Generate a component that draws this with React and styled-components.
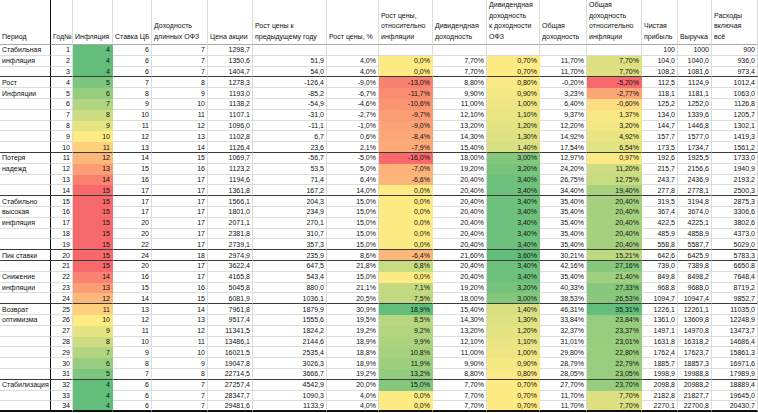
import React from 'react'
import styled, { createGlobalStyle } from 'styled-components'

const GlobalStyle = createGlobalStyle`
  html, body {
    margin: 0;
    padding: 0;
    background: #ffffff;
  }
  body {
    font-family: "Liberation Sans", Arial, sans-serif;
  }
`

const RED = [248, 105, 107]
const YEL = [255, 235, 132]
const GRN = [99, 190, 123]

const mix = (a, b, t) => {
  const k = Math.max(0, Math.min(1, t))
  const c = a.map((v, i) => Math.round(v + (b[i] - v) * k))
  return `rgb(${c[0]}, ${c[1]}, ${c[2]})`
}

const num = (s) => parseFloat(String(s).replace('%', '').replace(',', '.'))

// 3-color scale: low colour at min, yellow at mid, high colour at max
const scale3 = (v, min, mid, max, low, high) => {
  if (v <= mid) return mix(low, YEL, (v - min) / (mid - min))
  return mix(YEL, high, (v - mid) / (max - mid))
}

const colWidths = [51, 22, 40, 39, 56, 45, 74, 52, 54, 54, 53, 47, 55, 36, 34, 46]

const headers = [
  ['Период'],
  ['Год№'],
  ['Инфляция'],
  ['Ставка ЦБ'],
  ['Доходность', 'длинных ОФЗ'],
  ['Цена акции'],
  ['Рост цены к', 'предыдущему году'],
  ['Рост цены, %'],
  ['Рост цены,', 'относительно', 'инфляции'],
  ['Дивидендная', 'доходность'],
  ['Дивидендная', 'доходность', 'к доходности', 'ОФЗ'],
  ['Общая', 'доходность'],
  ['Общая', 'доходность', 'относительно', 'инфляции'],
  ['Чистая', 'прибыль'],
  ['Выручка'],
  ['Расходы', 'включая', 'всё'],
]

const labels = {
  1: 'Стабильная', 2: 'инфляция',
  4: 'Рост', 5: 'Инфляции',
  11: 'Потеря', 12: 'надежд',
  15: 'Стабильно', 16: 'высокая', 17: 'инфляция',
  20: 'Пик ставки',
  22: 'Снижение', 23: 'инфляции',
  25: 'Возврат', 26: 'оптимизма',
  32: 'Стабилизация',
}

const groupEnds = [3, 10, 14, 19, 20, 24, 31]

// year, inflation, rate, ofz, price, delta, pct, rel, div, divOfz, total, totalRel, profit, revenue, expenses
const rows = [
  [1, 4, 6, 7, '1298,7', '', '', '', '', '', '', '', '100', '1000', '900'],
  [2, 4, 6, 7, '1350,6', '51,9', '4,0%', '0,0%', '7,70%', '0,70%', '11,70%', '7,70%', '104,0', '1040,0', '936,0'],
  [3, 4, 6, 7, '1404,7', '54,0', '4,0%', '0,0%', '7,70%', '0,70%', '11,70%', '7,70%', '108,2', '1081,6', '973,4'],
  [4, 5, 7, 8, '1278,3', '-126,4', '-9,0%', '-13,0%', '8,80%', '0,80%', '-0,20%', '-5,20%', '112,5', '1124,9', '1012,4'],
  [5, 6, 8, 9, '1193,0', '-85,2', '-6,7%', '-11,7%', '9,90%', '0,90%', '3,23%', '-2,77%', '118,1', '1181,1', '1063,0'],
  [6, 7, 9, 10, '1138,2', '-54,9', '-4,6%', '-10,6%', '11,00%', '1,00%', '6,40%', '-0,60%', '125,2', '1252,0', '1126,8'],
  [7, 8, 10, 11, '1107,1', '-31,0', '-2,7%', '-9,7%', '12,10%', '1,10%', '9,37%', '1,37%', '134,0', '1339,6', '1205,7'],
  [8, 9, 11, 12, '1096,0', '-11,1', '-1,0%', '-9,0%', '13,20%', '1,20%', '12,20%', '3,20%', '144,7', '1446,8', '1302,1'],
  [9, 10, 12, 13, '1102,8', '6,7', '0,6%', '-8,4%', '14,30%', '1,30%', '14,92%', '4,92%', '157,7', '1577,0', '1419,3'],
  [10, 11, 13, 14, '1126,4', '23,6', '2,1%', '-7,9%', '15,40%', '1,40%', '17,54%', '6,54%', '173,5', '1734,7', '1561,2'],
  [11, 12, 14, 15, '1069,7', '-56,7', '-5,0%', '-16,0%', '18,00%', '3,00%', '12,97%', '0,97%', '192,6', '1925,5', '1733,0'],
  [12, 13, 15, 16, '1123,2', '53,5', '5,0%', '-7,0%', '19,20%', '3,20%', '24,20%', '11,20%', '215,7', '2156,6', '1940,9'],
  [13, 14, 16, 17, '1194,6', '71,4', '6,4%', '-6,6%', '20,40%', '3,40%', '26,75%', '12,75%', '243,7', '2436,9', '2193,2'],
  [14, 15, 17, 17, '1361,8', '167,2', '14,0%', '0,0%', '20,40%', '3,40%', '34,40%', '19,40%', '277,8', '2778,1', '2500,3'],
  [15, 15, 17, 17, '1566,1', '204,3', '15,0%', '0,0%', '20,40%', '3,40%', '35,40%', '20,40%', '319,5', '3194,8', '2875,3'],
  [16, 15, 17, 17, '1801,0', '234,9', '15,0%', '0,0%', '20,40%', '3,40%', '35,40%', '20,40%', '367,4', '3674,0', '3306,6'],
  [17, 15, 20, 17, '2071,1', '270,1', '15,0%', '0,0%', '20,40%', '3,40%', '35,40%', '20,40%', '422,5', '4225,1', '3802,6'],
  [18, 15, 20, 17, '2381,8', '310,7', '15,0%', '0,0%', '20,40%', '3,40%', '35,40%', '20,40%', '485,9', '4858,9', '4373,0'],
  [19, 15, 22, 17, '2739,1', '357,3', '15,0%', '0,0%', '20,40%', '3,40%', '35,40%', '20,40%', '558,8', '5587,7', '5029,0'],
  [20, 15, 24, 18, '2974,9', '235,9', '8,6%', '-6,4%', '21,60%', '3,60%', '30,21%', '15,21%', '642,6', '6425,9', '5783,3'],
  [21, 15, 20, 17, '3622,4', '647,5', '21,8%', '6,8%', '20,40%', '3,40%', '42,16%', '27,16%', '739,0', '7389,8', '6650,8'],
  [22, 14, 16, 17, '4165,8', '543,4', '15,0%', '0,0%', '20,40%', '3,40%', '35,40%', '21,40%', '849,8', '8498,2', '7648,4'],
  [23, 13, 15, 16, '5045,8', '880,0', '21,1%', '7,1%', '19,20%', '3,20%', '40,33%', '27,33%', '968,8', '9688,0', '8719,2'],
  [24, 12, 14, 15, '6081,9', '1036,1', '20,5%', '7,5%', '18,00%', '3,00%', '38,53%', '26,53%', '1094,7', '10947,4', '9852,7'],
  [25, 11, 13, 14, '7961,8', '1879,9', '30,9%', '18,9%', '15,40%', '1,40%', '46,31%', '35,31%', '1226,1', '12261,1', '11035,0'],
  [26, 10, 12, 13, '9517,4', '1555,6', '19,5%', '8,5%', '14,30%', '1,30%', '33,84%', '23,84%', '1361,0', '13609,8', '12248,9'],
  [27, 9, 11, 12, '11341,5', '1824,2', '19,2%', '9,2%', '13,20%', '1,20%', '32,37%', '23,37%', '1497,1', '14970,8', '13473,7'],
  [28, 8, 10, 11, '13486,1', '2144,6', '18,9%', '9,9%', '12,10%', '1,10%', '31,01%', '23,01%', '1631,8', '16318,2', '14686,4'],
  [29, 7, 9, 10, '16021,5', '2535,4', '18,8%', '10,8%', '11,00%', '1,00%', '29,80%', '22,80%', '1762,4', '17623,7', '15861,3'],
  [30, 6, 8, 9, '19047,8', '3026,3', '18,9%', '11,9%', '9,90%', '0,90%', '28,79%', '22,79%', '1885,7', '18857,3', '16971,6'],
  [31, 5, 7, 8, '22714,5', '3666,7', '19,2%', '13,2%', '8,80%', '0,80%', '28,05%', '23,05%', '1998,9', '19988,8', '17989,9'],
  [32, 4, 6, 7, '27257,4', '4542,9', '20,0%', '15,0%', '7,70%', '0,70%', '27,70%', '23,70%', '2098,8', '20988,2', '18889,4'],
  [33, 4, 6, 7, '28347,7', '1090,3', '4,0%', '0,0%', '7,70%', '0,70%', '11,70%', '7,70%', '2182,8', '21827,7', '19645,0'],
  [34, 4, 6, 7, '29481,6', '1133,9', '4,0%', '0,0%', '7,70%', '0,70%', '11,70%', '7,70%', '2270,1', '22700,8', '20430,7'],
]

// conditional formatting per column index (index in the row array)
const fills = {
  1: (v) => scale3(v, 4, 10, 15, GRN, RED),
  7: (v) => scale3(v, -16, 0, 18.9, RED, GRN),
  9: (v) => mix(YEL, GRN, (v - 0.7) / (3.6 - 0.7)),
  11: (v) => scale3(v, -5.2, 0, 35.31, RED, GRN),
}

const Sheet = styled.div`
  display: grid;
  grid-template-columns: ${colWidths.map((w) => `${w}px`).join(' ')};
  grid-template-rows: 45px repeat(34, 10.8px);
  width: 758px;
  font-size: 7px;
  color: #111;
`

const HeaderCell = styled.div`
  box-sizing: border-box;
  display: flex;
  flex-direction: column;
  justify-content: flex-end;
  padding: 0 2px 1px 2px;
  line-height: 10.8px;
  white-space: nowrap;
  overflow: hidden;
  border-bottom: 1px solid #a9a9a9;
  border-right: ${({ $first }) => ($first ? '1px solid #111' : '1px solid #dcdcdc')};
`

const Cell = styled.div`
  box-sizing: border-box;
  display: flex;
  align-items: center;
  justify-content: ${({ $left }) => ($left ? 'flex-start' : 'flex-end')};
  padding: 0 2px;
  white-space: nowrap;
  line-height: 1;
  background: ${({ $bg }) => $bg || '#ffffff'};
  border-right: 1px solid
    ${({ $first, $bg }) => ($first ? '#111' : $bg || '#dcdcdc')};
  border-bottom: ${({ $end, $last, $bg }) =>
    $last ? '2px solid #111' : $end ? '1px solid #3a3a3a' : `1px solid ${$bg || '#dcdcdc'}`};
`

export default function App() {
  return (
    <>
      <GlobalStyle />
      <Sheet>
        {headers.map((lines, i) => (
          <HeaderCell key={`h${i}`} $first={i === 0}>
            {lines.map((l) => (
              <span key={l}>{l}</span>
            ))}
          </HeaderCell>
        ))}
        {rows.map((row) => {
          const year = row[0]
          const end = groupEnds.includes(year)
          const last = year === 34
          return (
            <React.Fragment key={year}>
              <Cell $left $first $end={end} $last={last}>
                {labels[year] || ''}
              </Cell>
              {row.map((val, ci) => {
                const f = fills[ci]
                const bg = f && val !== '' ? f(num(val)) : undefined
                return (
                  <Cell key={ci} $bg={bg} $end={end} $last={last}>
                    {val}
                  </Cell>
                )
              })}
            </React.Fragment>
          )
        })}
      </Sheet>
    </>
  )
}
